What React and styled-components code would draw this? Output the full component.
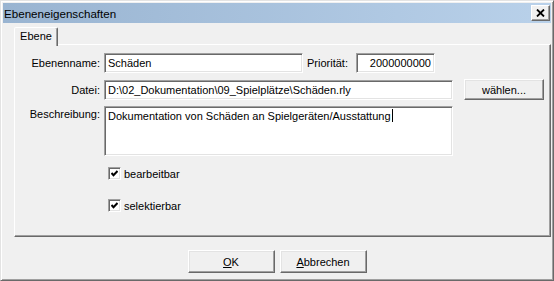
import React from "react";
import styled, { createGlobalStyle } from "styled-components";

const GlobalStyle = createGlobalStyle`
  html, body { margin: 0; padding: 0; background: #f0f0f0; }
  body { font-family: "Liberation Sans", Arial, sans-serif; font-size: 11px; color: #000; }
  * { box-sizing: border-box; }
`;

const Window = styled.div`
  width: 554px;
  height: 281px;
  display: flex;
  flex-direction: column;
  background: #f0f0f0;
  border: 1px solid;
  border-color: #e3e3e3 #696969 #696969 #e3e3e3;
  box-shadow: inset 1px 1px #fff, inset -1px -1px #a0a0a0;
  padding: 2px;
`;

const TitleBar = styled.div`
  height: 20px;
  display: flex;
  align-items: center;
  justify-content: space-between;
  padding: 0 1px 0 1px;
  background: linear-gradient(to right, #99b4d1, #b9d1ea);
`;

const Title = styled.span`
  font-size: 11.6px;
  color: #000;
`;

const CloseButton = styled.div`
  width: 19px;
  height: 16px;
  display: flex;
  align-items: center;
  justify-content: center;
  background: #f0f0f0;
  border: 1px solid;
  border-color: #fff #696969 #696969 #fff;
  box-shadow: inset -1px -1px #a0a0a0;
`;

const Body = styled.div`
  display: flex;
  flex-direction: column;
  padding: 4px 0 0 11px;
`;

const TabStrip = styled.div`
  height: 17px;
  display: flex;
  position: relative;
  z-index: 1;
`;

const Tab = styled.div`
  width: 44px;
  height: 19px;
  display: flex;
  align-items: center;
  justify-content: center;
  background: #f0f0f0;
  border: 1px solid;
  border-bottom: none;
  border-color: #fff #696969 transparent #fff;
  border-radius: 2px 2px 0 0;
  box-shadow: inset -1px 0 #a0a0a0;
  padding-bottom: 2px;
`;

const Panel = styled.div`
  height: 193px;
  display: flex;
  flex-direction: column;
  border: 1px solid;
  border-color: #fff #696969 #696969 #fff;
  box-shadow: inset -1px -1px #a0a0a0;
  padding-top: 8px;
`;

const Row = styled.div`
  display: flex;
  align-items: ${(p) => (p.$top ? "flex-start" : "center")};
  margin-top: ${(p) => p.$mt || 0}px;
`;

const Label = styled.div`
  width: 85px;
  text-align: right;
  padding-top: ${(p) => p.$pt || 0}px;
  flex: none;
`;

const SideLabel = styled.div`
  width: 53px;
  padding-left: 4px;
  flex: none;
`;

const sunken = `
  border: 1px solid;
  border-color: #a0a0a0 #fff #fff #a0a0a0;
  box-shadow: inset 1px 1px #696969, inset -1px -1px #e3e3e3;
  background: #fff;
`;

const TextInput = styled.input`
  ${sunken}
  width: ${(p) => p.$w}px;
  height: 20px;
  margin-left: ${(p) => p.$ml ?? 4}px;
  padding: 0 3px 0 3px;
  font-family: "Liberation Sans", Arial, sans-serif;
  font-size: 11px;
  color: #000;
  text-align: ${(p) => (p.$right ? "right" : "left")};
  outline: none;
  flex: none;
`;

const TextArea = styled.div`
  ${sunken}
  width: ${(p) => p.$w}px;
  height: ${(p) => p.$h}px;
  margin-left: 4px;
  padding: 2px 3px;
  line-height: 13px;
  flex: none;
`;

const Caret = styled.span`
  display: inline-block;
  width: 1px;
  height: 13px;
  background: #000;
  vertical-align: -2px;
  margin-left: 1px;
`;

const Button = styled.div`
  width: ${(p) => p.$w}px;
  height: ${(p) => p.$h}px;
  margin-left: ${(p) => p.$ml || 0}px;
  display: flex;
  align-items: center;
  justify-content: center;
  background: #f0f0f0;
  border: 1px solid;
  border-color: #fff #696969 #696969 #fff;
  box-shadow: inset -1px -1px #a0a0a0, inset 1px 1px #e3e3e3;
  flex: none;
`;

const CheckRow = styled.label`
  display: flex;
  align-items: center;
  gap: 3px;
  padding-left: 93px;
  margin-top: ${(p) => p.$mt}px;
`;

const CheckBox = styled.span`
  width: 13px;
  height: 13px;
  display: flex;
  align-items: center;
  justify-content: center;
  border: 1px solid;
  border-color: #a0a0a0 #fff #fff #a0a0a0;
  box-shadow: inset 1px 1px #696969, inset -1px -1px #e3e3e3;
  background: #fff;
`;

const ButtonRow = styled.div`
  display: flex;
  justify-content: center;
  gap: 5px;
  margin-top: 13px;
`;

const Check = () => (
  <svg width="7" height="7" viewBox="0 0 7 7">
    <path d="M0.5 3 L2.5 5.2 L6.5 1" stroke="#000" strokeWidth="2" fill="none" />
  </svg>
);

const XIcon = () => (
  <svg width="9" height="8" viewBox="0 0 9 8">
    <path d="M1 0.5 L8 7.5 M8 0.5 L1 7.5" stroke="#000" strokeWidth="1.8" />
  </svg>
);

export default function App() {
  return (
    <>
      <GlobalStyle />
      <Window>
        <TitleBar>
          <Title>Ebeneneigenschaften</Title>
          <CloseButton>
            <XIcon />
          </CloseButton>
        </TitleBar>
        <Body>
          <TabStrip>
            <Tab>Ebene</Tab>
          </TabStrip>
          <Panel>
            <Row>
              <Label>Ebenenname:</Label>
              <TextInput $w={199} readOnly value="Schäden" />
              <SideLabel>Priorität:</SideLabel>
              <TextInput $w={79} $ml={0} $right readOnly value="2000000000" />
            </Row>
            <Row $mt={6}>
              <Label>Datei:</Label>
              <TextInput $w={349} readOnly value="D:\02_Dokumentation\09_Spielplätze\Schäden.rly" />
              <Button $w={80} $h={21} $ml={11}>wählen...</Button>
            </Row>
            <Row $mt={6} $top>
              <Label $pt={2}>Beschreibung:</Label>
              <TextArea $w={349} $h={50}>
                Dokumentation von Schäden an Spielgeräten/Ausstattung
                <Caret />
              </TextArea>
            </Row>
            <CheckRow $mt={11}>
              <CheckBox>
                <Check />
              </CheckBox>
              bearbeitbar
            </CheckRow>
            <CheckRow $mt={19}>
              <CheckBox>
                <Check />
              </CheckBox>
              selektierbar
            </CheckRow>
          </Panel>
        </Body>
        <ButtonRow>
          <Button $w={87} $h={23}>
            <span><u>O</u>K</span>
          </Button>
          <Button $w={87} $h={23}>
            <span><u>A</u>bbrechen</span>
          </Button>
        </ButtonRow>
      </Window>
    </>
  );
}
